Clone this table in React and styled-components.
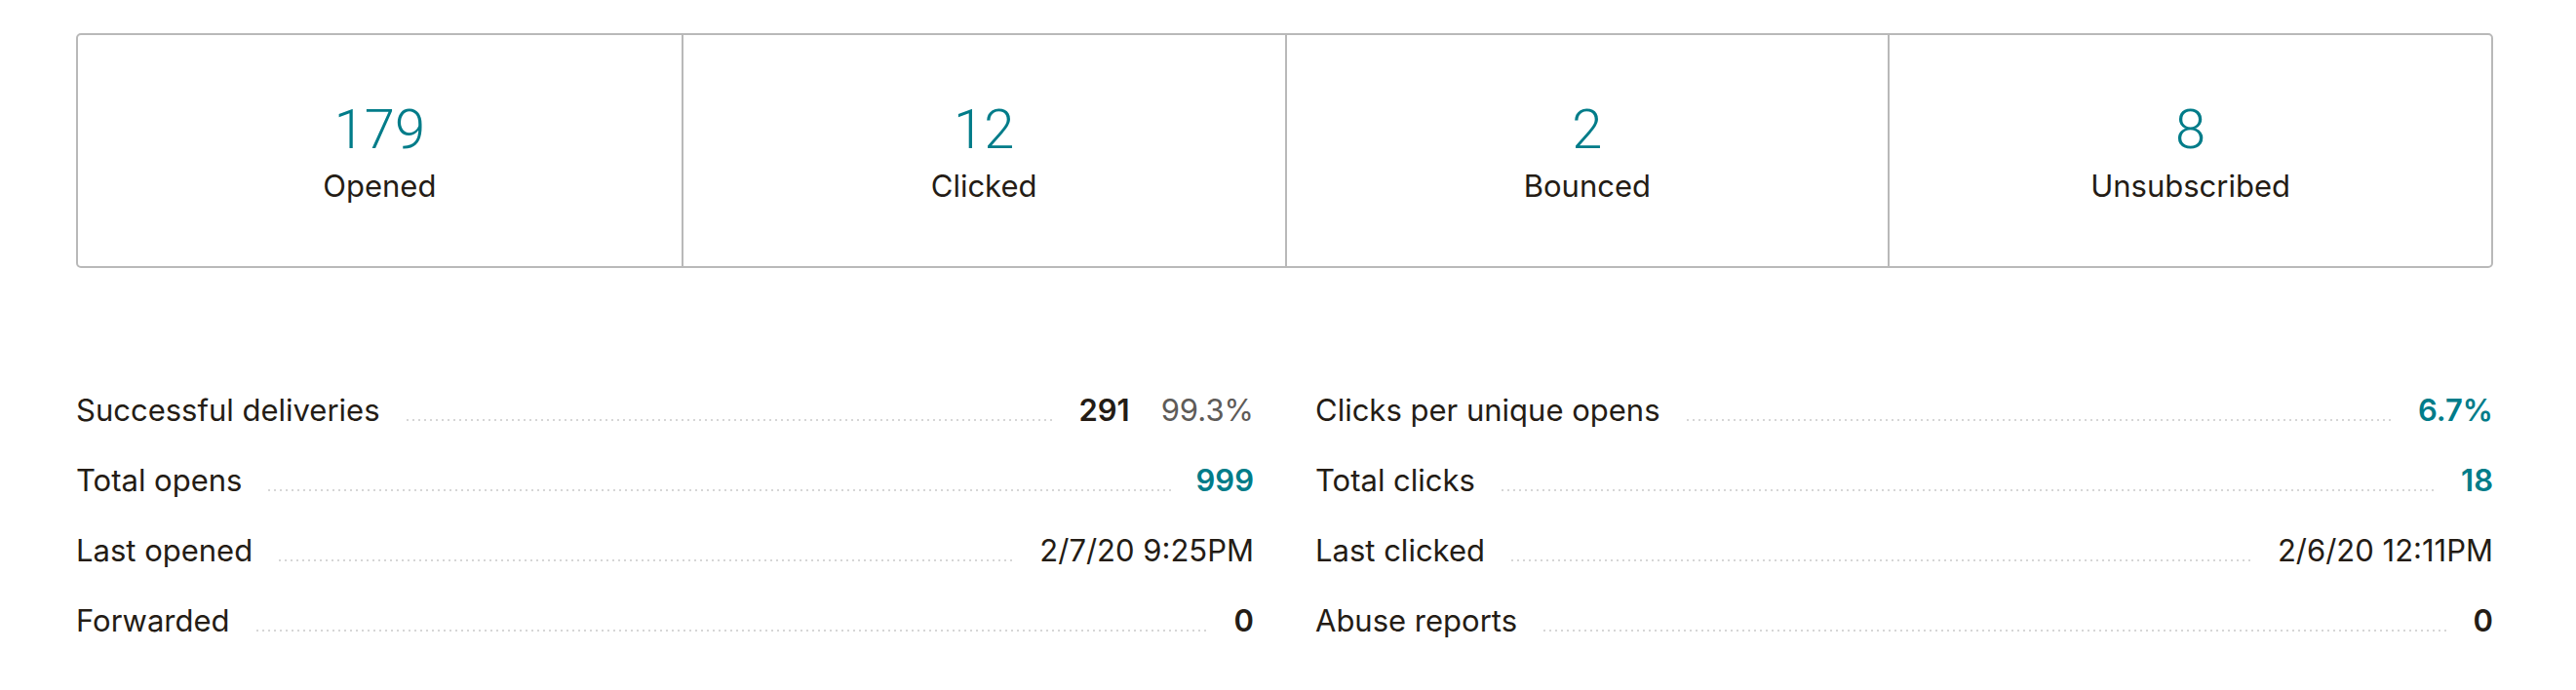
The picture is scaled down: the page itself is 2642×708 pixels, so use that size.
import styled, { createGlobalStyle } from "styled-components";

const GlobalStyle = createGlobalStyle`
  body {
    margin: 0;
    background: #fff;
    font-family: Inter, "Liberation Sans", sans-serif;
    color: #241c15;
  }
`;

const summary = [
  { value: "179", label: "Opened" },
  { value: "12", label: "Clicked" },
  { value: "2", label: "Bounced" },
  { value: "8", label: "Unsubscribed" },
];

const leftStats = [
  { label: "Successful deliveries", value: "291", extra: "99.3%", bold: true },
  { label: "Total opens", value: "999", bold: true, teal: true },
  { label: "Last opened", value: "2/7/20 9:25PM" },
  { label: "Forwarded", value: "0", bold: true },
];

const rightStats = [
  { label: "Clicks per unique opens", value: "6.7%", bold: true, teal: true },
  { label: "Total clicks", value: "18", bold: true, teal: true },
  { label: "Last clicked", value: "2/6/20 12:11PM" },
  { label: "Abuse reports", value: "0", bold: true },
];

const StatList = ({ items }) => (
  <Column>
    {items.map((item) => (
      <Row key={item.label}>
        <RowLabel>{item.label}</RowLabel>
        <Leader />
        <Value $bold={item.bold} $teal={item.teal}>
          {item.value}
        </Value>
        {item.extra && <Extra>{item.extra}</Extra>}
      </Row>
    ))}
  </Column>
);

export default function App() {
  return (
    <>
      <GlobalStyle />
      <Page>
        <SummaryCard>
          {summary.map((s) => (
            <SummaryCell key={s.label}>
              <BigNumber>{s.value}</BigNumber>
              <CellLabel>{s.label}</CellLabel>
            </SummaryCell>
          ))}
        </SummaryCard>
        <Stats>
          <StatList items={leftStats} />
          <StatList items={rightStats} />
        </Stats>
      </Page>
    </>
  );
}

const Page = styled.div`
  padding: 34px 85px 0 78px;
`;

const SummaryCard = styled.div`
  display: grid;
  grid-template-columns: repeat(4, 1fr);
  height: 241px;
  box-sizing: border-box;
  border: 2px solid #b9b9b9;
  border-radius: 5px;
`;

const SummaryCell = styled.div`
  display: flex;
  flex-direction: column;
  align-items: center;
  justify-content: center;
  padding-top: 6px;

  & + & {
    border-left: 2px solid #b9b9b9;
  }
`;

const BigNumber = styled.div`
  font-family: Roboto, "Liberation Sans", sans-serif;
  font-weight: 300;
  font-size: 56px;
  line-height: 60px;
  color: #007c89;
`;

const CellLabel = styled.div`
  font-size: 31px;
  line-height: 44px;
  margin-top: 6px;
`;

const Stats = styled.div`
  display: grid;
  grid-template-columns: 1fr 1fr;
  column-gap: 63px;
  margin-top: 110px;
`;

const Column = styled.div`
  display: flex;
  flex-direction: column;
`;

const Row = styled.div`
  display: flex;
  align-items: baseline;
  height: 72px;
  font-size: 31px;
  line-height: 72px;
`;

const RowLabel = styled.span`
  white-space: nowrap;
`;

const Leader = styled.span`
  flex: 1;
  height: 2px;
  margin: 0 25px 0 27px;
  background-image: linear-gradient(to right, #d6d6d6 2px, transparent 2px);
  background-size: 6px 2px;
  background-repeat: repeat-x;
`;

const Value = styled.span`
  white-space: nowrap;
  font-weight: ${(p) => (p.$bold ? 600 : 400)};
  color: ${(p) => (p.$teal ? "#007c89" : "#241c15")};
`;

const Extra = styled.span`
  margin-left: 32px;
  color: #5e5b58;
`;
